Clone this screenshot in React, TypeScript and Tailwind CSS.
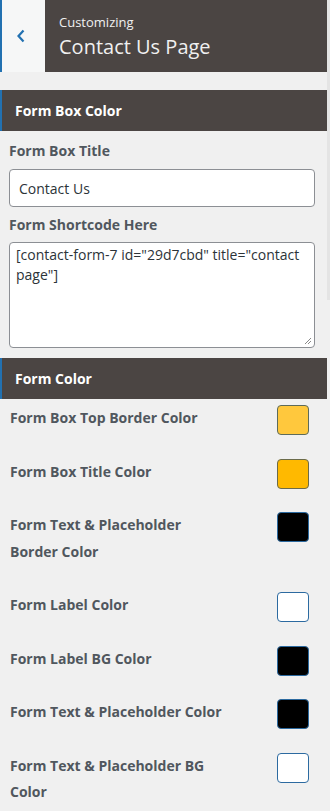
import React from "react";

const font = { fontFamily: '"Open Sans", "Noto Sans", sans-serif' };

type Row = { label: string; color: string; border: string };

const rows: Row[] = [
  { label: "Form Box Top Border Color", color: "#ffc83d", border: "#5d6b5b" },
  { label: "Form Box Title Color", color: "#ffb900", border: "#6b6b4a" },
  { label: "Form Text & Placeholder Border Color", color: "#000000", border: "#2c6aa0" },
  { label: "Form Label Color", color: "#ffffff", border: "#2c6aa0" },
  { label: "Form Label BG Color", color: "#000000", border: "#2c6aa0" },
  { label: "Form Text & Placeholder Color", color: "#000000", border: "#2c6aa0" },
  { label: "Form Text & Placeholder BG Color", color: "#ffffff", border: "#2c6aa0" },
];

function SectionHeader({ title }: { title: string }) {
  return (
    <div className="h-[41px] w-[327px] bg-[#4b4543] border-l-2 border-[#2271b1] flex items-center pl-[13px]">
      <span className="text-white text-[14px] font-bold">{title}</span>
    </div>
  );
}

export default function App() {
  return (
    <div className="w-[330px] h-[811px] bg-[#f0f0f0] overflow-hidden relative" style={font}>
      <div className="absolute right-0 top-0 w-[3px] h-[300px] bg-[#e4e4e4]" />
      {/* header */}
      <div className="flex h-[72px] w-[327px]">
        <div className="w-[45px] bg-[#f6f7f7] border-l-2 border-[#2271b1] flex items-center justify-center">
          <svg width="12" height="16" viewBox="0 0 12 16" className="ml-[-6px]">
            <path d="M8.5 2.5 L3.5 8 L8.5 13.5" fill="none" stroke="#2271b1" strokeWidth="2.2" />
          </svg>
        </div>
        <div className="flex-1 bg-[#4b4543] pl-[14px] pt-[12px]">
          <div className="text-[13px] leading-[20px] text-[#f0f0f0]">Customizing</div>
          <div className="text-[20px] leading-[30px] text-[#f0f0f0]">Contact Us Page</div>
        </div>
      </div>
      <div className="h-[18px]" />
      <SectionHeader title="Form Box Color" />
      <div className="px-[9px] pt-[9px]">
        <div className="text-[14px] font-bold text-[#50575e] leading-[22px]">Form Box Title</div>
        <div className="mt-[7px] h-[38px] w-[306px] bg-white border border-[#8c8f94] rounded-[4px] flex items-center pl-[9px] text-[14px] text-[#2c3338]">
          Contact Us
        </div>
        <div className="mt-[7px] text-[14px] font-bold text-[#50575e] leading-[22px]">Form Shortcode Here</div>
        <div className="relative mt-[6px] h-[106px] w-[306px] bg-white border border-[#8c8f94] rounded-[4px] px-[6px] pt-[2px] text-[14px] leading-[20px] text-[#2c3338]">
          [contact-form-7 id="29d7cbd" title="contact page"]
          <svg width="8" height="8" viewBox="0 0 8 8" className="absolute right-[2px] bottom-[2px]">
            <path d="M1 7 L7 1 M4 7 L7 4" stroke="#888" strokeWidth="1" />
          </svg>
        </div>
      </div>
      <div className="h-[10px]" />
      <SectionHeader title="Form Color" />
      <div className="pl-[10px] pr-[21px] pt-[6px]">
        {rows.map((r) => (
          <div key={r.label} className="flex items-start justify-between mb-[27px]">
            <div className="w-[217px] text-[14px] font-bold text-[#50575e] leading-[26.5px]">{r.label}</div>
            <div
              className="w-[32px] h-[30px] mb-[-4px] rounded-[4px] border"
              style={{ backgroundColor: r.color, borderColor: r.border }}
            />
          </div>
        ))}
      </div>
    </div>
  );
}
